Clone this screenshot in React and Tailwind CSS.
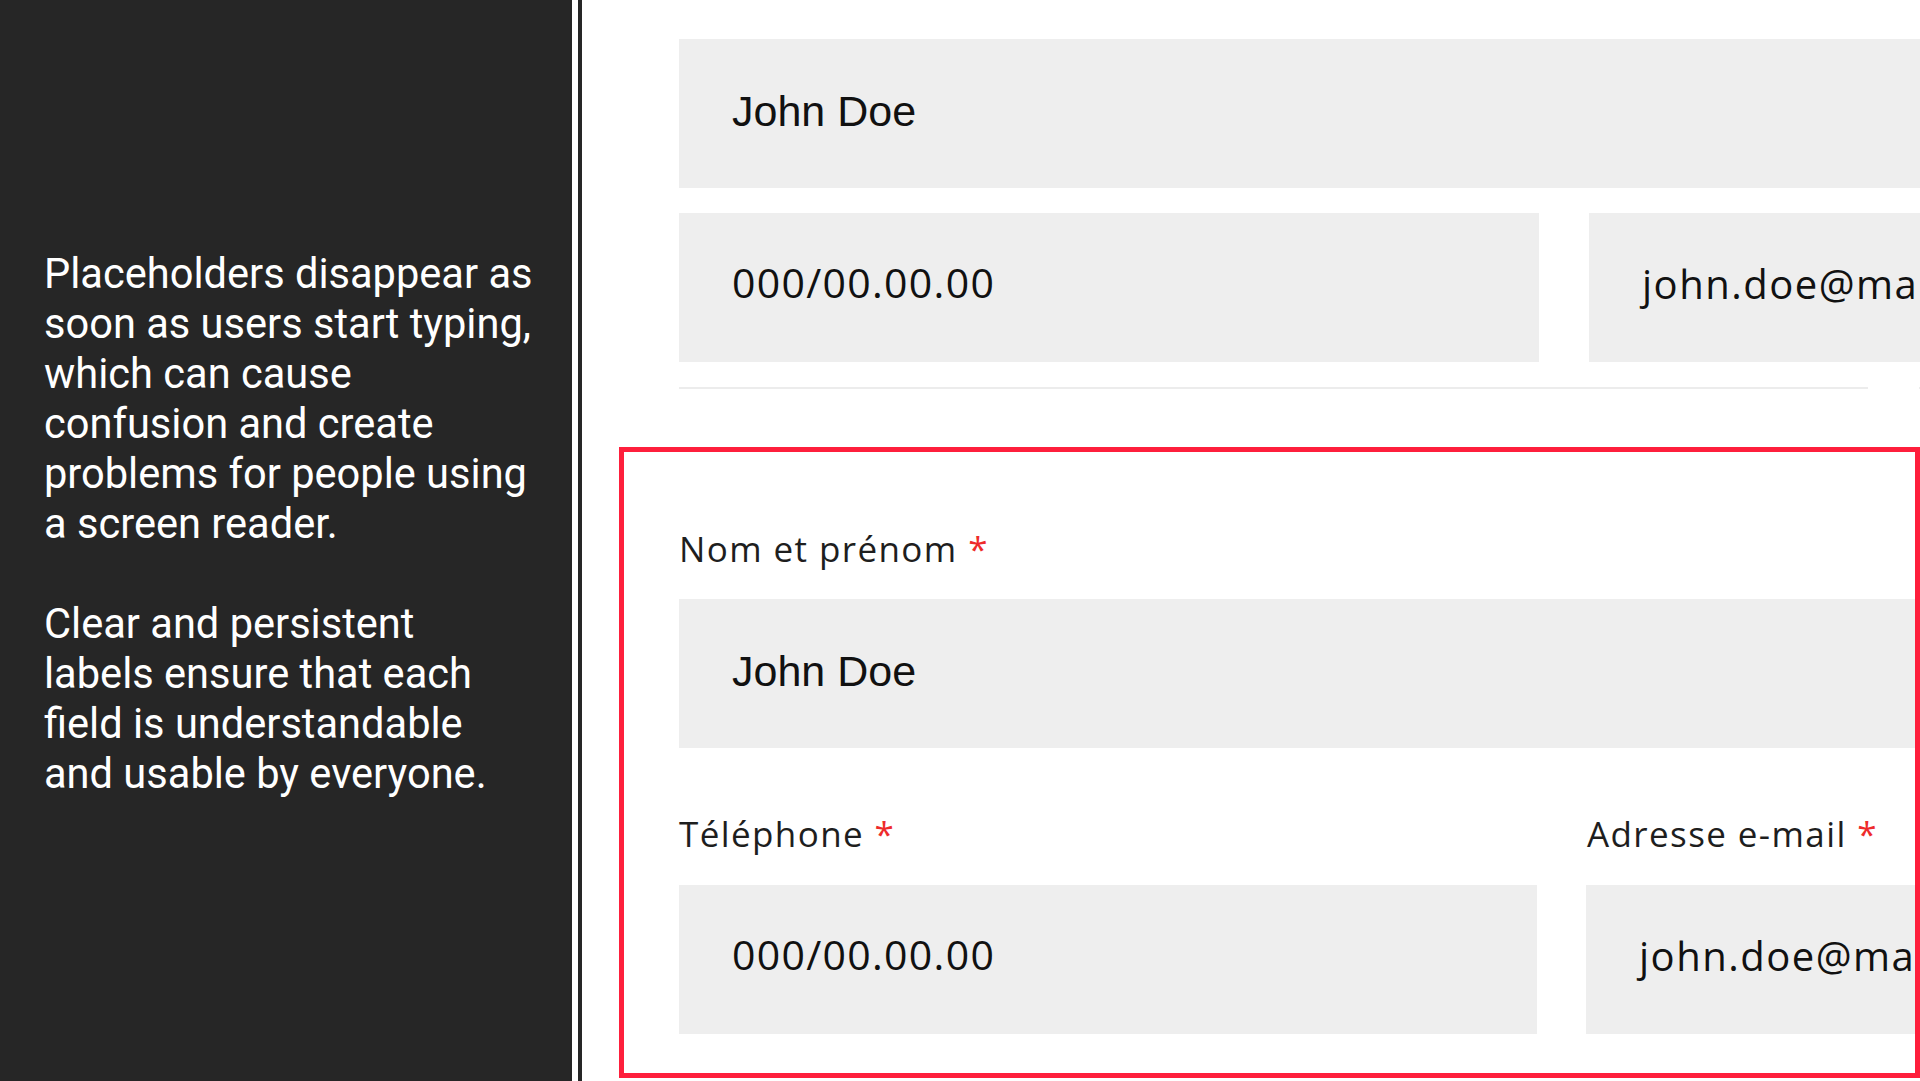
import React from "react";

const roboto = { fontFamily: "Roboto, 'Liberation Sans', sans-serif" };

function Label({ children }) {
  return (
    <div
      className="h-[48px] leading-[48px] text-[35px] tracking-[1.4px] text-[#1e1e1e] whitespace-nowrap"
      style={{ fontFamily: "'Open Sans', sans-serif" }}
    >
      {children} <span className="text-[#ee2b2b]">*</span>
    </div>
  );
}

function NameInput({ w = "w-[1400px]" }) {
  return (
    <div className={`${w} h-[149px] shrink-0 bg-[#eeeeee] flex items-center pl-[53px] pb-[5px]`}>
      <span
        className="text-[43px] text-[#111111] whitespace-nowrap"
        style={{ fontFamily: "'Liberation Sans', Arial, sans-serif" }}
      >
        John Doe
      </span>
    </div>
  );
}

function PhoneInput({ w }) {
  return (
    <div className={`${w} h-[149px] shrink-0 bg-[#eeeeee] flex items-center pl-[53px] pb-[10px]`}>
      <span
        className="text-[41px] tracking-[1.3px] text-[#111111] whitespace-nowrap"
        style={{ fontFamily: "'Open Sans', sans-serif" }}
      >
        000/00.00.00
      </span>
    </div>
  );
}

function EmailInput() {
  return (
    <div className="w-[600px] h-[149px] shrink-0 bg-[#eeeeee] flex items-center pl-[53px] pb-[8px]">
      <span
        className="text-[40px] tracking-[1.5px] text-[#111111] whitespace-nowrap"
        style={{ fontFamily: "'Open Sans', sans-serif" }}
      >
        john.doe@mail.com
      </span>
    </div>
  );
}

export default function App() {
  return (
    <div className="w-[1920px] h-[1081px] flex overflow-hidden bg-white">
      <div className="w-[572px] shrink-0 bg-[#262626] pl-[44px] pt-[249px] text-white text-[41.6px] leading-[50px]" style={roboto}>
        <p>
          <span className="block whitespace-nowrap">Placeholders disappear as</span>
          <span className="block whitespace-nowrap">soon as users start typing,</span>
          <span className="block whitespace-nowrap">which can cause</span>
          <span className="block whitespace-nowrap">confusion and create</span>
          <span className="block whitespace-nowrap">problems for people using</span>
          <span className="block whitespace-nowrap">a screen reader.</span>
        </p>
        <p className="mt-[50px]">
          <span className="block whitespace-nowrap">Clear and persistent</span>
          <span className="block whitespace-nowrap">labels ensure that each</span>
          <span className="block whitespace-nowrap">field is understandable</span>
          <span className="block whitespace-nowrap">and usable by everyone.</span>
        </p>
      </div>
      <div className="w-[6px] shrink-0 bg-white" />
      <div className="w-[4px] shrink-0 bg-[#262626]" />
      <div className="flex-1 min-w-0 overflow-hidden pt-[39px]">
        <div className="pl-[97px] flex flex-col gap-[25px]">
          <NameInput />
          <div className="flex gap-[50px]">
            <PhoneInput w="w-[860px]" />
            <EmailInput />
          </div>
          <div className="flex gap-[51px]">
            <div className="w-[1189px] h-[2px] bg-[#ececec] shrink-0" />
            <div className="w-[100px] h-[2px] bg-[#ececec] shrink-0" />
          </div>
        </div>
        <div className="ml-[37px] mt-[58px] w-[1301px] border-[5px] border-[#fe1f3c] overflow-hidden pl-[55px] pt-[73px] pb-[39px]">
          <Label>Nom et prénom</Label>
          <div className="mt-[26px]">
            <NameInput />
          </div>
          <div className="flex gap-[49px] mt-[62px]">
            <div className="flex flex-col gap-[27px] shrink-0">
              <Label>Téléphone</Label>
              <PhoneInput w="w-[858px]" />
            </div>
            <div className="flex flex-col gap-[27px] shrink-0">
              <div className="pl-[1px]">
                <Label>Adresse e-mail</Label>
              </div>
              <EmailInput />
            </div>
          </div>
        </div>
      </div>
    </div>
  );
}
